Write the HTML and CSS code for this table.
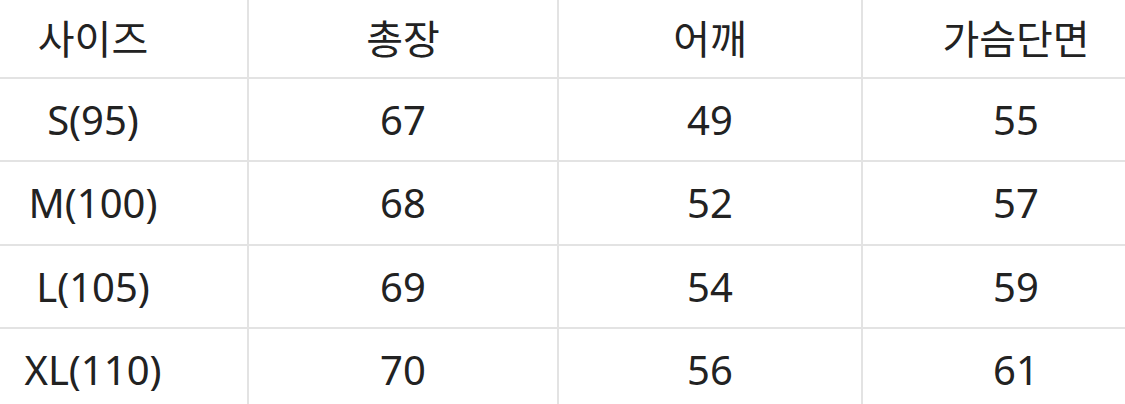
FILE: index.html
```html
<!DOCTYPE html>
<html lang="ko">
<head>
<meta charset="utf-8">
<title>사이즈표</title>
<link rel="stylesheet" href="styles.css">
</head>
<body>
<div class="frame">
  <table class="size-table">
    <colgroup>
      <col class="c1"><col class="c2"><col class="c3"><col class="c4">
    </colgroup>
    <thead>
      <tr class="head"><th>사이즈</th><th>총장</th><th>어깨</th><th>가슴단면</th></tr>
    </thead>
    <tbody>
      <tr class="r1"><td>S(95)</td><td>67</td><td>49</td><td>55</td></tr>
      <tr class="r2"><td>M(100)</td><td>68</td><td>52</td><td>57</td></tr>
      <tr class="r3"><td>L(105)</td><td>69</td><td>54</td><td>59</td></tr>
      <tr class="r4"><td>XL(110)</td><td>70</td><td>56</td><td>61</td></tr>
    </tbody>
  </table>
</div>
</body>
</html>
```

FILE: styles.css
```css
html, body {
  margin: 0;
  padding: 0;
  background: #ffffff;
}
.frame {
  width: 1125px;
  height: 404px;
  overflow: hidden;
}
.size-table {
  margin-left: -63px;
  width: 1232px;
  border-collapse: collapse;
  table-layout: fixed;
  font-family: "Noto Sans", "Noto Sans CJK KR", sans-serif;
  font-size: 40px;
  color: #222222;
}
.c1 { width: 310px; }
.c2 { width: 310px; }
.c3 { width: 304px; }
.c4 { width: 308px; }
.size-table th,
.size-table td {
  padding: 0;
  text-align: center;
  vertical-align: middle;
  font-weight: 400;
  border: 2px solid #e3e3e3;
  line-height: 1;
}
.size-table thead th { border-top: none; }
.head { height: 78px; }
.r1 { height: 83px; }
.r2 { height: 84px; }
.r3 { height: 83px; }
.r4 { height: 84px; }
```
